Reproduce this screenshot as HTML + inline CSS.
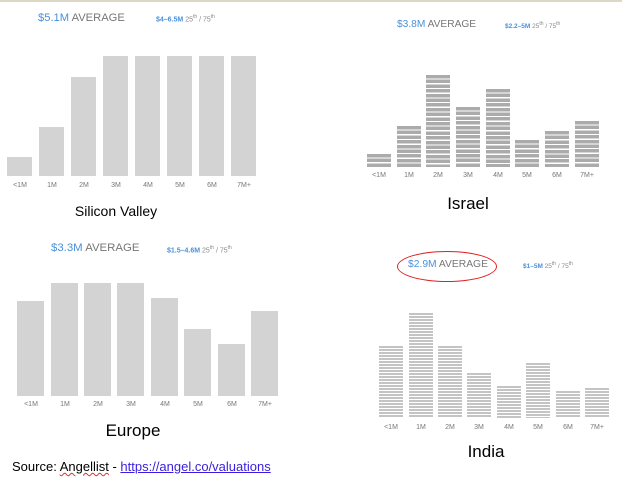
<!DOCTYPE html>
<html><head><meta charset="utf-8"><style>
*{margin:0;padding:0;box-sizing:border-box}
body{width:632px;height:486px;background:#fff;position:relative;overflow:hidden;font-family:"Liberation Sans",Arial,sans-serif}
.a{position:absolute}
.b{position:absolute;background:#d3d3d3}
.s{position:absolute;background:repeating-linear-gradient(to bottom,#ababab 0,#ababab 3.5px,#fff 3.5px,#fff 4.7px)}
.t{position:absolute;background:repeating-linear-gradient(to bottom,#c4c4c4 0,#c4c4c4 2px,#fff 2px,#fff 3px)}
.l{position:absolute;font-size:7px;color:#777;text-align:center;width:30px}
.h{position:absolute;color:#777;white-space:nowrap}
.h b{color:#4a90d9;font-weight:normal}
.sub{position:absolute;font-size:7px;color:#888;white-space:nowrap}
.sub b{color:#4a90d9}
.sub sup{font-size:5px}
.ti{position:absolute;color:#000;white-space:nowrap;transform:translateX(-50%)}
</style></head><body>
<div class="a" style="left:0;top:0;width:622px;height:2px;background:#dcd8c6"></div>

<!-- Silicon Valley -->
<div class="h" style="left:38px;top:12px;font-size:11.2px"><b>$5.1M</b> AVERAGE</div>
<div class="sub" style="left:156px;top:14px"><b>$4–6.5M</b> 25<sup>th</sup> / 75<sup>th</sup></div>
<div class="b" style="left:7px;top:157px;width:25px;height:19px"></div>
<div class="b" style="left:39px;top:127px;width:25px;height:49px"></div>
<div class="b" style="left:71px;top:77px;width:25px;height:99px"></div>
<div class="b" style="left:103px;top:56px;width:25px;height:120px"></div>
<div class="b" style="left:135px;top:56px;width:25px;height:120px"></div>
<div class="b" style="left:167px;top:56px;width:25px;height:120px"></div>
<div class="b" style="left:199px;top:56px;width:25px;height:120px"></div>
<div class="b" style="left:231px;top:56px;width:25px;height:120px"></div>
<div class="l" style="left:5px;top:182px">&lt;1M</div>
<div class="l" style="left:37px;top:182px">1M</div>
<div class="l" style="left:69px;top:182px">2M</div>
<div class="l" style="left:101px;top:182px">3M</div>
<div class="l" style="left:133px;top:182px">4M</div>
<div class="l" style="left:165px;top:182px">5M</div>
<div class="l" style="left:197px;top:182px">6M</div>
<div class="l" style="left:229px;top:182px">7M+</div>
<div class="ti" style="left:116px;top:203px;font-size:14px">Silicon Valley</div>

<!-- Israel -->
<div class="h" style="left:397px;top:19px;font-size:10.2px"><b>$3.8M</b> AVERAGE</div>
<div class="sub" style="left:505px;top:21px;font-size:6.5px"><b>$2.2–5M</b> 25<sup>th</sup> / 75<sup>th</sup></div>
<div class="s" style="left:367px;top:154px;width:24px;height:13px"></div>
<div class="s" style="left:397px;top:126px;width:24px;height:41px"></div>
<div class="s" style="left:426px;top:75px;width:24px;height:92px"></div>
<div class="s" style="left:456px;top:107px;width:24px;height:60px"></div>
<div class="s" style="left:486px;top:89px;width:24px;height:78px"></div>
<div class="s" style="left:515px;top:140px;width:24px;height:27px"></div>
<div class="s" style="left:545px;top:131px;width:24px;height:36px"></div>
<div class="s" style="left:575px;top:121px;width:24px;height:46px"></div>
<div class="l" style="left:364px;top:172px">&lt;1M</div>
<div class="l" style="left:394px;top:172px">1M</div>
<div class="l" style="left:423px;top:172px">2M</div>
<div class="l" style="left:453px;top:172px">3M</div>
<div class="l" style="left:483px;top:172px">4M</div>
<div class="l" style="left:512px;top:172px">5M</div>
<div class="l" style="left:542px;top:172px">6M</div>
<div class="l" style="left:572px;top:172px">7M+</div>
<div class="ti" style="left:468px;top:194px;font-size:17px">Israel</div>

<!-- Europe -->
<div class="h" style="left:51px;top:242px;font-size:11.4px"><b>$3.3M</b> AVERAGE</div>
<div class="sub" style="left:167px;top:245px"><b>$1.5–4.6M</b> 25<sup>th</sup> / 75<sup>th</sup></div>
<div class="b" style="left:17px;top:301px;width:27px;height:95px"></div>
<div class="b" style="left:51px;top:283px;width:27px;height:113px"></div>
<div class="b" style="left:84px;top:283px;width:27px;height:113px"></div>
<div class="b" style="left:117px;top:283px;width:27px;height:113px"></div>
<div class="b" style="left:151px;top:298px;width:27px;height:98px"></div>
<div class="b" style="left:184px;top:329px;width:27px;height:67px"></div>
<div class="b" style="left:218px;top:344px;width:27px;height:52px"></div>
<div class="b" style="left:251px;top:311px;width:27px;height:85px"></div>
<div class="l" style="left:16px;top:401px">&lt;1M</div>
<div class="l" style="left:50px;top:401px">1M</div>
<div class="l" style="left:83px;top:401px">2M</div>
<div class="l" style="left:116px;top:401px">3M</div>
<div class="l" style="left:150px;top:401px">4M</div>
<div class="l" style="left:183px;top:401px">5M</div>
<div class="l" style="left:217px;top:401px">6M</div>
<div class="l" style="left:250px;top:401px">7M+</div>
<div class="ti" style="left:133px;top:421px;font-size:17px">Europe</div>

<!-- India -->
<div class="a" style="left:397px;top:251px;width:100px;height:31px;border:1.3px solid #e02020;border-radius:50%"></div>
<div class="h" style="left:408px;top:259px;font-size:10.3px"><b>$2.9M</b> AVERAGE</div>
<div class="sub" style="left:523px;top:261px;font-size:6.5px"><b>$1–5M</b> 25<sup>th</sup> / 75<sup>th</sup></div>
<div class="t" style="left:379px;top:346px;width:24px;height:72px"></div>
<div class="t" style="left:409px;top:313px;width:24px;height:105px"></div>
<div class="t" style="left:438px;top:346px;width:24px;height:72px"></div>
<div class="t" style="left:467px;top:373px;width:24px;height:45px"></div>
<div class="t" style="left:497px;top:386px;width:24px;height:32px"></div>
<div class="t" style="left:526px;top:363px;width:24px;height:55px"></div>
<div class="t" style="left:556px;top:391px;width:24px;height:27px"></div>
<div class="t" style="left:585px;top:388px;width:24px;height:30px"></div>
<div class="l" style="left:376px;top:424px">&lt;1M</div>
<div class="l" style="left:406px;top:424px">1M</div>
<div class="l" style="left:435px;top:424px">2M</div>
<div class="l" style="left:464px;top:424px">3M</div>
<div class="l" style="left:494px;top:424px">4M</div>
<div class="l" style="left:523px;top:424px">5M</div>
<div class="l" style="left:553px;top:424px">6M</div>
<div class="l" style="left:582px;top:424px">7M+</div>
<div class="ti" style="left:486px;top:442px;font-size:17px">India</div>

<div class="a" style="left:12px;top:459px;font-size:13px;color:#000;white-space:nowrap">Source: <span style="text-decoration:underline wavy #e03030;text-decoration-thickness:1px">Angellist</span> - <span style="color:#3a1ee0;text-decoration:underline">https://angel.co/valuations</span></div>
</body></html>
